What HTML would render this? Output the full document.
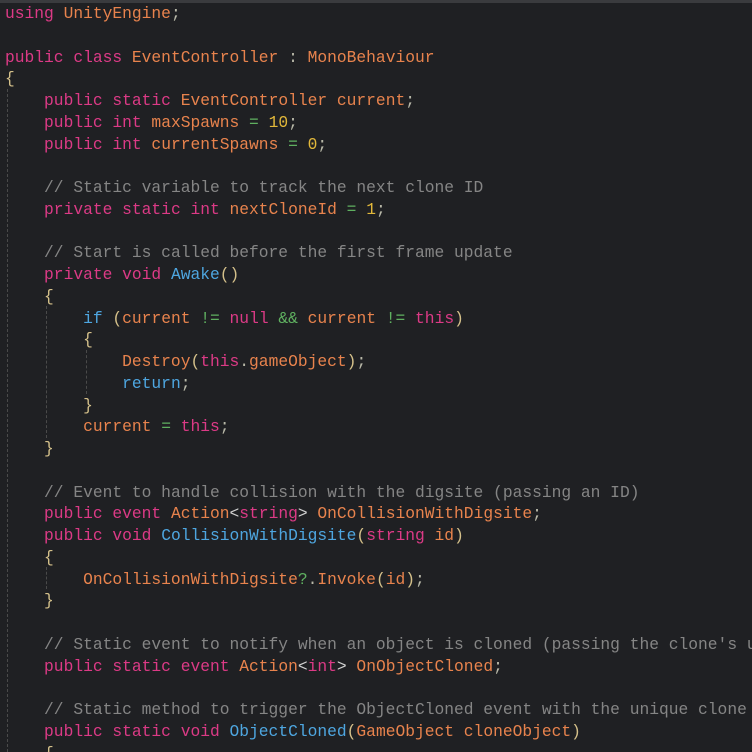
<!DOCTYPE html>
<html><head><meta charset="utf-8"><style>
html,body{margin:0;padding:0;background:#1f2023;width:752px;height:752px;overflow:hidden}
.wrap{position:absolute;left:0;top:0;width:752px;height:752px;overflow:hidden}
.top{position:absolute;left:0;top:0;width:752px;height:3px;background:#3a3b3e}
pre{position:absolute;left:5px;top:3px;margin:0;font-family:"Liberation Mono",monospace;font-size:16.28px;line-height:21.75px;color:#e8834d;white-space:pre}
.k{color:#dc3a86}.o{color:#e8834d}.b{color:#4ea6e0}.g{color:#5fb060}.n{color:#e2b83a}.p{color:#d4c08a}.c{color:#858585}.s{color:#b8b8a8}.w{color:#d0d0d0}
.gd{position:absolute;width:0;border-left:1px dashed #4a4a4a}
</style></head><body>
<div class="wrap">
<div class="top"></div>
<div class="gd" style="left:7px;top:89px;height:663px"></div>
<div class="gd" style="left:46px;top:306px;height:132px"></div>
<div class="gd" style="left:86px;top:350px;height:44px"></div>
<div class="gd" style="left:46px;top:567px;height:22px"></div>
<pre><span class="k">using</span> UnityEngine<span class="s">;</span>

<span class="k">public class</span> EventController <span class="s">:</span> MonoBehaviour
<span class="p">{</span>
    <span class="k">public static</span> EventController current<span class="s">;</span>
    <span class="k">public int</span> maxSpawns <span class="g">=</span> <span class="n">10</span><span class="s">;</span>
    <span class="k">public int</span> currentSpawns <span class="g">=</span> <span class="n">0</span><span class="s">;</span>

    <span class="c">// Static variable to track the next clone ID</span>
    <span class="k">private static int</span> nextCloneId <span class="g">=</span> <span class="n">1</span><span class="s">;</span>

    <span class="c">// Start is called before the first frame update</span>
    <span class="k">private void</span> <span class="b">Awake</span><span class="p">()</span>
    <span class="p">{</span>
        <span class="b">if</span> <span class="p">(</span>current <span class="g">!=</span> <span class="k">null</span> <span class="g">&amp;&amp;</span> current <span class="g">!=</span> <span class="k">this</span><span class="p">)</span>
        <span class="p">{</span>
            Destroy<span class="p">(</span><span class="k">this</span><span class="s">.</span>gameObject<span class="p">)</span><span class="s">;</span>
            <span class="b">return</span><span class="s">;</span>
        <span class="p">}</span>
        current <span class="g">=</span> <span class="k">this</span><span class="s">;</span>
    <span class="p">}</span>

    <span class="c">// Event to handle collision with the digsite (passing an ID)</span>
    <span class="k">public event</span> Action<span class="w">&lt;</span><span class="k">string</span><span class="w">&gt;</span> OnCollisionWithDigsite<span class="s">;</span>
    <span class="k">public void</span> <span class="b">CollisionWithDigsite</span><span class="p">(</span><span class="k">string</span> id<span class="p">)</span>
    <span class="p">{</span>
        OnCollisionWithDigsite<span class="g">?</span><span class="s">.</span>Invoke<span class="p">(</span>id<span class="p">)</span><span class="s">;</span>
    <span class="p">}</span>

    <span class="c">// Static event to notify when an object is cloned (passing the clone's u</span>
    <span class="k">public static event</span> Action<span class="w">&lt;</span><span class="k">int</span><span class="w">&gt;</span> OnObjectCloned<span class="s">;</span>

    <span class="c">// Static method to trigger the ObjectCloned event with the unique clone</span>
    <span class="k">public static void</span> <span class="b">ObjectCloned</span><span class="p">(</span>GameObject cloneObject<span class="p">)</span>
    <span class="p">{</span></pre>
</div>
</body></html>
